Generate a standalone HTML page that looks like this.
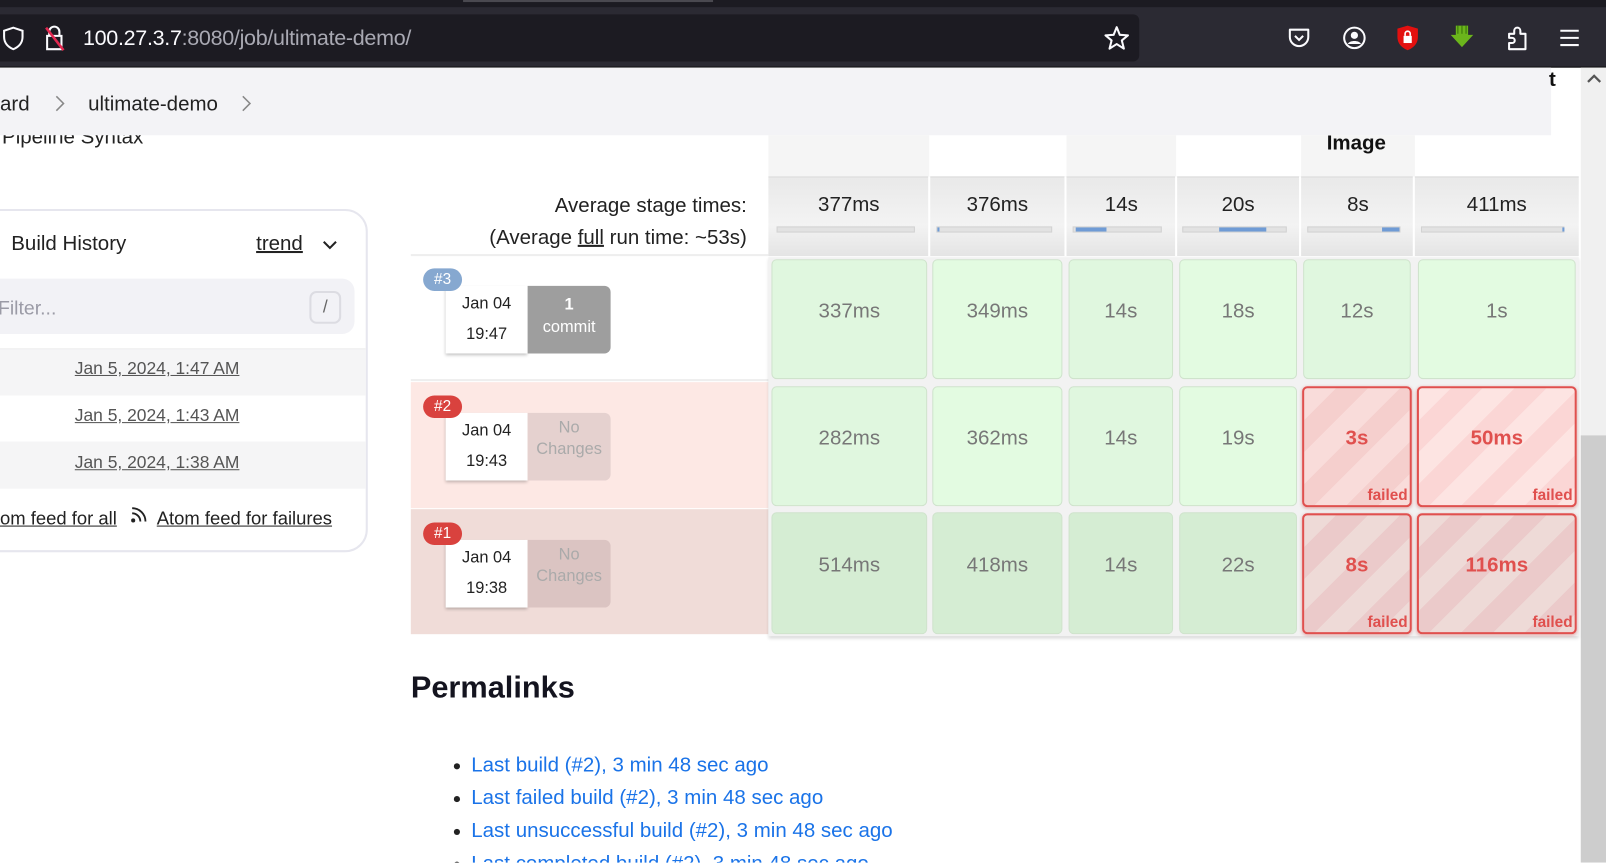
<!DOCTYPE html>
<html><head><meta charset="utf-8"><style>
*{box-sizing:border-box;margin:0;padding:0}
html,body{width:1606px;height:862px;overflow:hidden;background:#fff}
#w{position:absolute;left:0;top:0;width:1568px;height:842px;transform:scale(1.0245);transform-origin:0 0;font-family:"Liberation Sans",sans-serif;overflow:hidden}
.a{position:absolute}
.t{white-space:nowrap}
.cell{position:absolute;border-radius:5px;border:1px solid #cfe3cc;display:flex;align-items:center;justify-content:center;font-size:20px;color:#777;padding-bottom:15px}
.g1{background:#e0f7df}.g2{background:#e3fbe1}.g3{background:#d5edd3}
.f{border:2px solid #e0504e;color:#e0504e;font-weight:bold;box-shadow:0 1px 3px rgba(200,60,60,.4)}
.f1{background:repeating-linear-gradient(135deg,#f9dcda 0 22px,#f5cfcd 22px 44px)}
.f2{background:repeating-linear-gradient(135deg,#fde4e2 0 22px,#fbd6d5 22px 44px)}
.f3{background:repeating-linear-gradient(135deg,#eedad7 0 22px,#ebcaca 22px 44px)}
.fl{position:absolute;right:2px;bottom:1px;font-size:15px}
.bar{position:absolute;top:221px;height:6px;background:#e2e2e2;border:1px solid #d2d2d2}
.bar i{position:absolute;top:0;height:4px;background:#6f9bd5}
.avg{position:absolute;top:189px;font-size:20px;color:#222;text-align:center}
.badge{position:absolute;width:38px;height:22px;border-radius:11px;color:#fff;font-size:15px;text-align:center;line-height:22px}
.dc{position:absolute;width:80px;height:66px;background:#fff;box-shadow:0 2px 3px rgba(0,0,0,.25);font-size:16px;color:#222;text-align:center}
.ch{position:absolute;width:81px;height:66px;border-radius:0 6px 6px 0;text-align:center;font-size:16px}
.li{position:absolute;left:446px;font-size:20px;color:#1a73e8}
.li:before{content:"";position:absolute;left:-3px;top:9px;width:6px;height:6px;border-radius:50%;background:#222}
.li span{margin-left:14px}
.hl{position:absolute;top:132px;height:41px}
</style></head><body><div id="w">
<div class="a" style="left:0;top:0;width:1568px;height:66px;background:#2b2a33"></div>
<div class="a" style="left:0;top:0;width:1568px;height:7px;background:#1c1b22"></div>
<div class="a" style="left:452px;top:0;width:244px;height:2px;background:#4a4950"></div>
<div class="a" style="left:0;top:14px;width:1112px;height:46px;background:#1c1b22;border-radius:0 6px 6px 0"></div>
<div class="a" style="left:0;top:65px;width:1568px;height:1px;background:#0c0c0d"></div>
<svg class="a" style="left:0;top:24px" width="26" height="26" viewBox="0 0 26 26"><path d="M13 3 L22 6 V12 C22 18 18 22 13 24 C8 22 4 18 4 12 V6 Z" fill="none" stroke="#fbfbfe" stroke-width="2"/></svg>
<svg class="a" style="left:40px;top:23px" width="26" height="28" viewBox="0 0 26 28"><path d="M8 12 V8 a5 5 0 0 1 10 0 V12 M6 12 H20 V25 H6 Z" fill="none" stroke="#fbfbfe" stroke-width="2"/><path d="M5 4 L22 26" stroke="#e22850" stroke-width="2.5"/></svg>
<div class="a t" style="left:81px;top:26px;font-size:21px;color:#fbfbfe;letter-spacing:-0.3px">100.27.3.7<span style="color:#a9a9b3">:8080/job/ultimate-demo/</span></div>
<svg class="a" style="left:1077px;top:24px" width="26" height="26" viewBox="0 0 26 26"><path d="M13 2.5 L16 10 L24 10.5 L18 15.5 L20 23.5 L13 19 L6 23.5 L8 15.5 L2 10.5 L10 10 Z" fill="none" stroke="#fbfbfe" stroke-width="2" stroke-linejoin="round"/></svg>
<svg class="a" style="left:1256px;top:25px" width="24" height="24" viewBox="0 0 24 24"><path d="M3 4 H21 V11 a9 9 0 0 1 -18 0 Z" fill="none" stroke="#fbfbfe" stroke-width="2" stroke-linejoin="round"/><path d="M8 10 L12 14 L16 10" fill="none" stroke="#fbfbfe" stroke-width="2"/></svg>
<svg class="a" style="left:1310px;top:25px" width="24" height="24" viewBox="0 0 24 24"><circle cx="12" cy="12" r="10" fill="none" stroke="#fbfbfe" stroke-width="2"/><circle cx="12" cy="9.5" r="3.5" fill="#fbfbfe"/><path d="M5.5 18 C7 14 17 14 18.5 18" fill="#fbfbfe"/></svg>
<svg class="a" style="left:1362px;top:24px" width="24" height="26" viewBox="0 0 24 26"><path d="M12 1 L22 4 V12 C22 19 17 23 12 25 C7 23 2 19 2 12 V4 Z" fill="#e3100f"/><rect x="8" y="11" width="8" height="7" fill="#fff"/><path d="M9.5 11 V9 a2.5 2.5 0 0 1 5 0 V11" fill="none" stroke="#fff" stroke-width="1.6"/></svg>
<svg class="a" style="left:1414px;top:24px" width="26" height="24" viewBox="0 0 26 24"><path d="M7 1 H19 V10 H24 L13 22 L2 10 H7 Z" fill="#6bb51c"/><path d="M9 1 V9 M13 1 V9 M17 1 V9" stroke="#3f7c0c" stroke-width="1.2"/></svg>
<svg class="a" style="left:1468px;top:24px" width="26" height="26" viewBox="0 0 26 26"><path d="M5 9 H10 V6 a3 3 0 0 1 6 0 V9 H21 V24 H5 V18 H8 a2.5 2.5 0 0 0 0 -5 H5 Z" fill="none" stroke="#fbfbfe" stroke-width="2" stroke-linejoin="round"/></svg>
<svg class="a" style="left:1521px;top:27px" width="22" height="20" viewBox="0 0 22 20"><path d="M2 3 H20 M2 10 H20 M2 17 H20" stroke="#fbfbfe" stroke-width="2"/></svg>

<div class="a" style="left:1543px;top:66px;width:25px;height:776px;background:#f0f0f0"></div>
<div class="a" style="left:1543px;top:425px;width:25px;height:417px;background:#cdcdcd"></div>
<svg class="a" style="left:1548px;top:71px" width="16" height="12" viewBox="0 0 16 12"><path d="M2 9 L8 3 L14 9" fill="none" stroke="#555" stroke-width="2.2"/></svg>

<div class="a t" style="left:2px;top:123px;font-size:20px;color:#222">Pipeline Syntax</div>
<div class="a" style="left:0;top:66px;width:1514px;height:66px;background:#f3f3f6"></div>
<div class="a t" style="left:0;top:91px;font-size:20px;color:#222">ard</div>
<svg class="a" style="left:52px;top:91px" width="14" height="20" viewBox="0 0 14 20"><path d="M3 3 L10 10 L3 17" fill="none" stroke="#888" stroke-width="1.5"/></svg>
<div class="a t" style="left:86px;top:91px;font-size:20px;color:#222">ultimate-demo</div>
<svg class="a" style="left:234px;top:91px" width="14" height="20" viewBox="0 0 14 20"><path d="M3 3 L10 10 L3 17" fill="none" stroke="#888" stroke-width="1.5"/></svg>
<div class="a t" style="left:1512px;top:67px;font-size:20px;font-weight:bold;color:#111">t</div>

<div class="a" style="left:-30px;top:204px;width:389px;height:335px;border:2px solid #e6e6ee;border-radius:22px;overflow:hidden">
 <div class="a" style="left:0;top:134px;width:389px;height:46px;background:#f5f5f6;border-top:1px solid #eee"></div>
 <div class="a" style="left:0;top:225px;width:389px;height:46px;background:#f5f5f6"></div>
</div>
<div class="a t" style="left:11px;top:227px;font-size:20px;color:#222">Build History</div>
<div class="a t" style="left:250px;top:227px;font-size:20px;color:#222;text-decoration:underline">trend</div>
<svg class="a" style="left:314px;top:231px" width="16" height="16" viewBox="0 0 16 16"><path d="M2 5 L8 11 L14 5" fill="none" stroke="#222" stroke-width="2"/></svg>
<div class="a" style="left:-20px;top:272px;width:366px;height:54px;background:#f2f2f6;border-radius:12px"></div>
<div class="a t" style="left:-2px;top:291px;font-size:19px;color:#9b9ba6">Filter...</div>
<div class="a" style="left:302px;top:284px;width:31px;height:32px;border:2px solid #dcdce2;border-radius:7px;color:#666;font-size:17px;text-align:center;line-height:28px">/</div>
<div class="a t" style="left:73px;top:350px;font-size:17px;color:#555;text-decoration:underline">Jan 5, 2024, 1:47 AM</div>
<div class="a t" style="left:73px;top:396px;font-size:17px;color:#555;text-decoration:underline">Jan 5, 2024, 1:43 AM</div>
<div class="a t" style="left:73px;top:442px;font-size:17px;color:#555;text-decoration:underline">Jan 5, 2024, 1:38 AM</div>
<div class="a t" style="left:0;top:496px;font-size:18px;color:#222;text-decoration:underline">om feed for all</div>
<svg class="a" style="left:126px;top:493px" width="20" height="20" viewBox="0 0 20 20"><circle cx="4" cy="15" r="2" fill="#222"/><path d="M3 8 a8 8 0 0 1 8 8 M3 3 a13 13 0 0 1 13 13" fill="none" stroke="#222" stroke-width="1.8"/></svg>
<div class="a t" style="left:153px;top:496px;font-size:18px;color:#222;text-decoration:underline">Atom feed for failures</div>

<div class="hl" style="left:750px;width:157px;background:#f5f5f5"></div>
<div class="hl" style="left:1041px;width:107px;background:#f5f5f5"></div>
<div class="hl" style="left:1270px;width:111px;background:#f5f5f5"></div>
<div class="a t" style="left:1295px;top:129px;font-size:20px;font-weight:bold;color:#111">Image</div>
<div class="a" style="left:401px;top:172px;width:349px;height:78px;background:#fff;border-bottom:2px solid #eee"></div>
<div class="a" style="left:750px;top:172px;width:791px;height:78px;background:linear-gradient(#e9e9e9,#f3f3f3 60%,#e4e4e4);border-top:2px solid #e2e2e2"></div>
<div class="a" style="left:906px;top:172px;width:2px;height:78px;background:#fff"></div>
<div class="a" style="left:1039px;top:172px;width:2px;height:78px;background:#fff"></div>
<div class="a" style="left:1147px;top:172px;width:2px;height:78px;background:#fff"></div>
<div class="a" style="left:1268px;top:172px;width:2px;height:78px;background:#fff"></div>
<div class="a" style="left:1379px;top:172px;width:2px;height:78px;background:#fff"></div>
<div class="a t" style="left:401px;top:186px;width:328px;text-align:right;font-size:20px;color:#222;line-height:31px">Average stage times:<br>(Average <u>full</u> run time: ~53s)</div>
<div class="avg" style="left:750px;width:157px">377ms</div>
<div class="avg" style="left:907px;width:133px">376ms</div>
<div class="avg" style="left:1041px;width:107px">14s</div>
<div class="avg" style="left:1148px;width:121px">20s</div>
<div class="avg" style="left:1270px;width:111px">8s</div>
<div class="avg" style="left:1381px;width:160px">411ms</div>
<div class="bar" style="left:758px;width:135px"></div>
<div class="bar" style="left:914px;width:113px"><i style="left:0;width:2px"></i></div>
<div class="bar" style="left:1047px;width:87px"><i style="left:2px;width:30px"></i></div>
<div class="bar" style="left:1154px;width:102px"><i style="left:35px;width:46px"></i></div>
<div class="bar" style="left:1276px;width:91px"><i style="left:72px;width:17px"></i></div>
<div class="bar" style="left:1387px;width:140px"><i style="left:137px;width:2px"></i></div>

<div class="a" style="left:401px;top:251px;width:349px;height:121px;background:#fff;border-bottom:2px solid #eee"></div>
<div class="a" style="left:401px;top:373px;width:349px;height:123px;background:#fde8e4"></div>
<div class="a" style="left:401px;top:497px;width:349px;height:122px;background:#f0dcd8"></div>
<div class="a" style="left:750px;top:251px;width:791px;height:370px;background:#f2f2f2;box-shadow:0 2px 3px rgba(0,0,0,.15)"></div>

<div class="dc" style="left:435px;top:279px"><div style="padding-top:9px">Jan 04</div><div style="padding-top:12px">19:47</div></div>
<div class="ch" style="left:515px;top:279px;background:#9e9e9e;color:#fff"><div style="padding-top:10px;font-weight:bold">1</div><div style="padding-top:4px">commit</div></div>
<div class="badge" style="left:413px;top:262px;background:#86a8d0">#3</div>
<div class="dc" style="left:435px;top:403px"><div style="padding-top:9px">Jan 04</div><div style="padding-top:12px">19:43</div></div>
<div class="ch" style="left:515px;top:403px;background:#e5d1cf;color:#aaa"><div style="padding-top:6px">No</div><div style="padding-top:3px">Changes</div></div>
<div class="badge" style="left:413px;top:386px;background:#d9423e">#2</div>
<div class="dc" style="left:435px;top:527px"><div style="padding-top:9px">Jan 04</div><div style="padding-top:12px">19:38</div></div>
<div class="ch" style="left:515px;top:527px;background:#dbc4c2;color:#aaa"><div style="padding-top:6px">No</div><div style="padding-top:3px">Changes</div></div>
<div class="badge" style="left:413px;top:510px;background:#d9423e">#1</div>

<div class="cell g1" style="left:753px;top:253px;width:152px;height:117px">337ms</div>
<div class="cell g2" style="left:910px;top:253px;width:127px;height:117px">349ms</div>
<div class="cell g1" style="left:1043px;top:253px;width:102px;height:117px">14s</div>
<div class="cell g2" style="left:1151px;top:253px;width:115px;height:117px">18s</div>
<div class="cell g1" style="left:1272px;top:253px;width:105px;height:117px">12s</div>
<div class="cell g2" style="left:1384px;top:253px;width:154px;height:117px">1s</div>

<div class="cell g1" style="left:753px;top:377px;width:152px;height:117px">282ms</div>
<div class="cell g2" style="left:910px;top:377px;width:127px;height:117px">362ms</div>
<div class="cell g1" style="left:1043px;top:377px;width:102px;height:117px">14s</div>
<div class="cell g2" style="left:1151px;top:377px;width:115px;height:117px">19s</div>
<div class="cell f f1" style="left:1271px;top:377px;width:107px;height:118px">3s<span class="fl">failed</span></div>
<div class="cell f f2" style="left:1383px;top:377px;width:156px;height:118px">50ms<span class="fl">failed</span></div>

<div class="cell g3" style="left:753px;top:500px;width:152px;height:119px">514ms</div>
<div class="cell g3" style="left:910px;top:500px;width:127px;height:119px">418ms</div>
<div class="cell g3" style="left:1043px;top:500px;width:102px;height:119px">14s</div>
<div class="cell g3" style="left:1151px;top:500px;width:115px;height:119px">22s</div>
<div class="cell f f3" style="left:1271px;top:501px;width:107px;height:118px">8s<span class="fl">failed</span></div>
<div class="cell f f3" style="left:1383px;top:501px;width:156px;height:118px">116ms<span class="fl">failed</span></div>

<div class="a t" style="left:401px;top:655px;font-size:30px;font-weight:bold;color:#14141f">Permalinks</div>
<div class="li t" style="top:736px"><span>Last build (#2), 3 min 48 sec ago</span></div>
<div class="li t" style="top:768px"><span>Last failed build (#2), 3 min 48 sec ago</span></div>
<div class="li t" style="top:800px"><span>Last unsuccessful build (#2), 3 min 48 sec ago</span></div>
<div class="li t" style="top:832px"><span>Last completed build (#2), 3 min 48 sec ago</span></div>
</div></body></html>
